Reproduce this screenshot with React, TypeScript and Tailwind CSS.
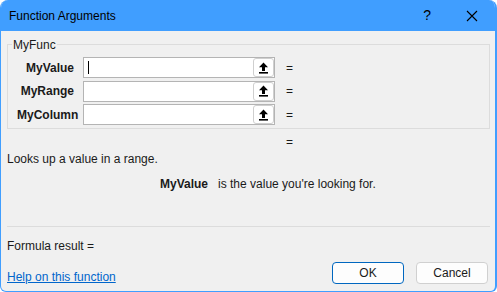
import React from "react";

function UpIcon() {
  return (
    <svg width="11" height="12" viewBox="0 0 11 12" className="block">
      <path d="M5.5 0.5 L1 5.2 H4 V9 H7 V5.2 H10 Z" fill="#000" />
      <rect x="1" y="10" width="9" height="1.6" fill="#000" />
    </svg>
  );
}

function ArgRow({ label, caret }: { label: string; caret?: boolean }) {
  return (
    <div className="flex items-center h-[21px]">
      <div className="w-[57px] text-right font-bold">{label}</div>
      <div className="ml-[9px] w-[192px] h-[21px] bg-white border border-[#b4b4b4] flex items-center justify-between pl-[3px]">
        <div className="h-[15px] flex items-center">
          {caret ? <div className="w-px h-[13px] bg-black ml-[1px]" /> : null}
        </div>
        <div className="w-[21px] h-[19px] bg-white border border-[#cfcfcf] rounded-[3px] flex items-center justify-center">
          <UpIcon />
        </div>
      </div>
      <div className="ml-[11px]">=</div>
    </div>
  );
}

export default function App() {
  return (
    <div
      className="w-[497px] h-[292px] bg-[#f0f0f0] text-[12px] text-[#1a1a1a] border-l border-b border-r-2 border-[#409eff] rounded-t-[8px] rounded-b-[6px] flex flex-col overflow-hidden"
      style={{ fontFamily: '"Liberation Sans", Arial, sans-serif' }}
    >
      <div className="h-[31px] bg-[#409eff] flex items-center pl-[8px] shrink-0">
        <span className="text-[12px] text-black">Function Arguments</span>
        <div className="ml-auto flex items-center">
          <span className="text-[14px] text-black mr-[35px]">?</span>
          <svg width="12" height="12" viewBox="0 0 12 12" className="mr-[17px]">
            <path d="M1 1 L11 11 M11 1 L1 11" stroke="#000" strokeWidth="1.1" />
          </svg>
        </div>
      </div>
      <div className="flex flex-col px-[6px] pt-[6px]">
        <div className="relative border border-[#dcdcdc] mt-[7px] w-[483px] h-[85px] pt-[12px]">
          <span className="absolute left-[4px] top-[-9px] bg-[#f0f0f0] px-[1px] text-[#1a1a1a]">MyFunc</span>
          <div className="flex flex-col gap-[2.5px] pl-[9px]">
            <ArgRow label="MyValue" caret />
            <ArgRow label="MyRange" />
            <ArgRow label="MyColumn" />
          </div>
        </div>
        <div className="h-[16px] mt-[5px] pl-[279px] leading-[16px]">=</div>
        <div className="h-[16px] mt-[1px] leading-[16px]">Looks up a value in a range.</div>
        <div className="h-[16px] mt-[9px] leading-[16px] pl-[153px] flex">
          <span className="font-bold">MyValue</span>
          <span className="ml-[10px]">is the value you're looking for.</span>
        </div>
        <div className="mt-[34px] h-px bg-[#dcdcdc] w-[483px]" />
        <div className="h-[16px] mt-[11px] leading-[16px]">Formula result =</div>
        <div className="flex items-center mt-[1px]">
          <a href="#" className="text-[#0066cc] underline mt-[13px]">Help on this function</a>
          <div className="ml-auto flex gap-[12px] mr-[1px] mt-[5px]">
            <button className="w-[72px] h-[22px] bg-[#fdfdfd] border border-[#0067c0] rounded-[4px] text-[#1a1a1a]">OK</button>
            <button className="w-[72px] h-[22px] bg-[#fdfdfd] border border-[#d0d0d0] rounded-[4px] text-[#1a1a1a]">Cancel</button>
          </div>
        </div>
      </div>
    </div>
  );
}
